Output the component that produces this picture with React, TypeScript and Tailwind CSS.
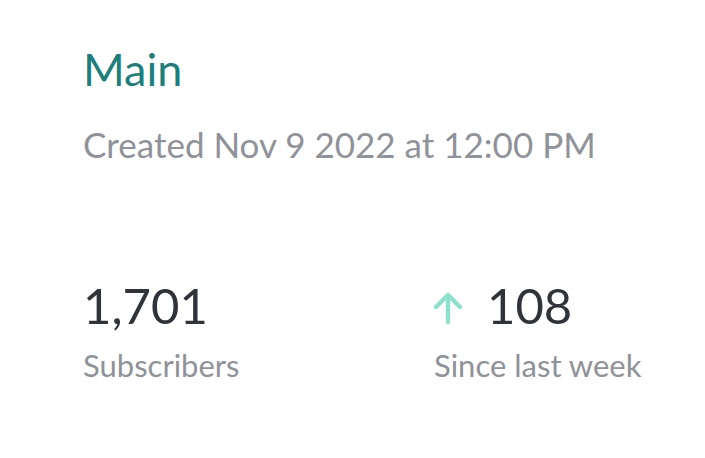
export default function App() {
  return (
    <div
      className="w-[705px] h-[458px] bg-white pl-[83px] pt-[47px]"
      style={{ fontFamily: 'Lato, "Noto Sans", sans-serif' }}
    >
      <h1 className="text-[45px] leading-[45px] text-[#1d7f7b]">Main</h1>
      <p className="mt-[35px] text-[35px] leading-[35px] text-[#8f9298]">
        Created Nov 9 2022 at 12:00 PM
      </p>
      <div className="mt-[119px] flex">
        <div className="w-[351px]">
          <div className="text-[49px] leading-[49px] text-[#30343a]">1,701</div>
          <div className="mt-[20px] text-[31px] leading-[31px] text-[#8f9298]">Subscribers</div>
        </div>
        <div>
          <div className="flex items-start text-[49px] leading-[49px] text-[#30343a]">
            <svg
              width="30"
              height="34"
              viewBox="0 0 30 34"
              fill="none"
              stroke="#8ee0cf"
              strokeWidth="4.5"
              strokeLinecap="round"
              strokeLinejoin="round"
              className="ml-[-1px] mr-[24px] mt-[10px]"
            >
              <path d="M15 5V31" />
              <path d="M3 16L15 4L27 16" />
            </svg>
            108
          </div>
          <div className="mt-[20px] text-[31px] leading-[31px] text-[#8f9298]">Since last week</div>
        </div>
      </div>
    </div>
  );
}
